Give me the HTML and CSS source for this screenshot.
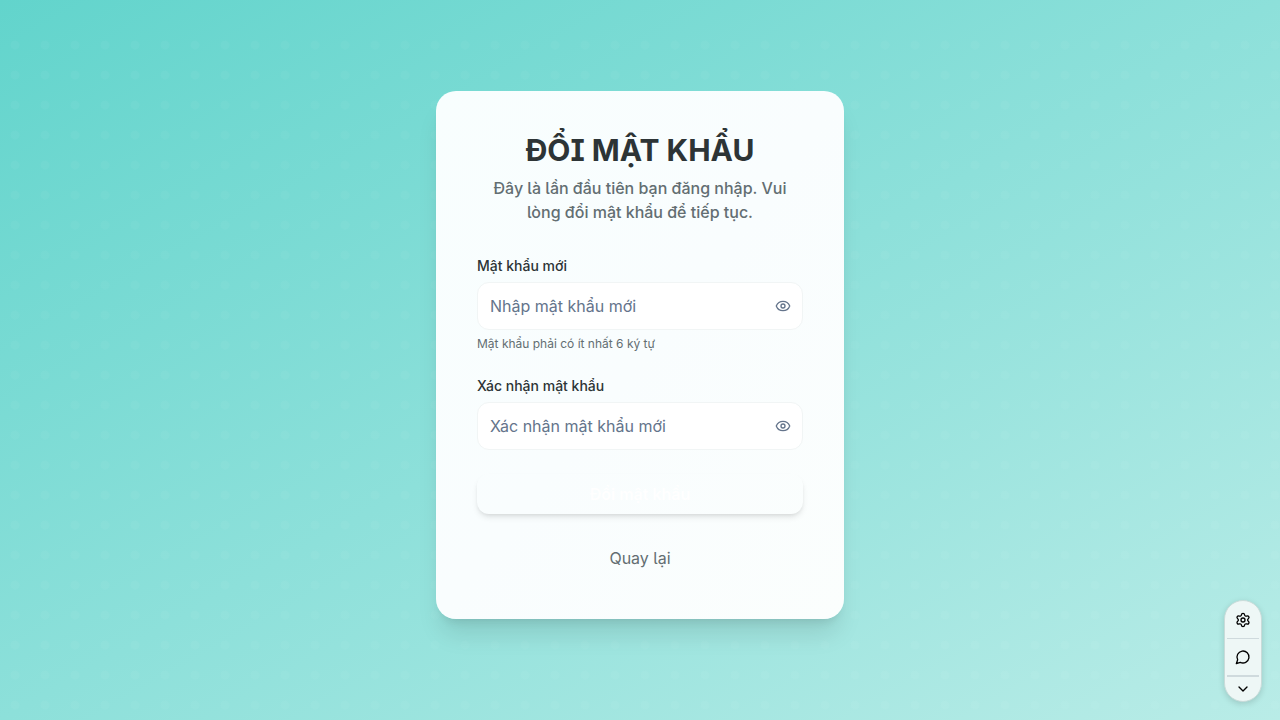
FILE: index.html
```html
<!DOCTYPE html>
<html lang="vi">
<head>
<meta charset="utf-8">
<meta name="viewport" content="width=device-width, initial-scale=1">
<title>Đổi mật khẩu</title>
<link rel="stylesheet" href="styles.css">
</head>
<body>
<main class="page">
  <form class="card">
    <header class="card-header">
      <h1 class="title">ĐỔI MẬT KHẨU</h1>
      <p class="subtitle">Đây là lần đầu tiên bạn đăng nhập. Vui lòng đổi mật khẩu để tiếp tục.</p>
    </header>
    <div class="fields">
      <div class="field">
        <label class="label" for="new-password">Mật khẩu mới</label>
        <div class="control">
          <input class="input" id="new-password" type="password" placeholder="Nhập mật khẩu mới">
          <button class="reveal" type="button" aria-label="Hiện mật khẩu">
            <svg class="eye" viewBox="0 0 24 24"><path d="M2.062 12.348a1 1 0 0 1 0-.696 10.75 10.75 0 0 1 19.876 0 1 1 0 0 1 0 .696 10.75 10.75 0 0 1-19.876 0"/><circle cx="12" cy="12" r="3"/></svg>
          </button>
        </div>
        <p class="hint">Mật khẩu phải có ít nhất 6 ký tự</p>
      </div>
      <div class="field">
        <label class="label" for="confirm-password">Xác nhận mật khẩu</label>
        <div class="control">
          <input class="input" id="confirm-password" type="password" placeholder="Xác nhận mật khẩu mới">
          <button class="reveal" type="button" aria-label="Hiện mật khẩu">
            <svg class="eye" viewBox="0 0 24 24"><path d="M2.062 12.348a1 1 0 0 1 0-.696 10.75 10.75 0 0 1 19.876 0 1 1 0 0 1 0 .696 10.75 10.75 0 0 1-19.876 0"/><circle cx="12" cy="12" r="3"/></svg>
          </button>
        </div>
      </div>
    </div>
    <button class="submit" type="submit">Đổi mật khẩu</button>
    <button class="back" type="button">Quay lại</button>
  </form>
</main>
<aside class="toolbar" aria-label="Công cụ">
  <button class="tool" type="button" aria-label="Cài đặt">
    <svg class="tool-icon" viewBox="0 0 24 24"><path d="M9.671 4.136a2.34 2.34 0 0 1 4.659 0 2.34 2.34 0 0 0 3.319 1.915 2.34 2.34 0 0 1 2.33 4.033 2.34 2.34 0 0 0 0 3.831 2.34 2.34 0 0 1-2.33 4.033 2.34 2.34 0 0 0-3.319 1.915 2.34 2.34 0 0 1-4.659 0 2.34 2.34 0 0 0-3.32-1.915 2.34 2.34 0 0 1-2.33-4.033 2.34 2.34 0 0 0 0-3.831A2.34 2.34 0 0 1 6.35 6.051a2.34 2.34 0 0 0 3.319-1.915"/><circle cx="12" cy="12" r="3"/></svg>
  </button>
  <button class="tool" type="button" aria-label="Trò chuyện">
    <svg class="tool-icon" viewBox="0 0 24 24"><path d="M7.9 20A9 9 0 1 0 4 16.1L2 22Z"/></svg>
  </button>
  <button class="tool tool-small" type="button" aria-label="Thu gọn">
    <svg class="tool-icon" viewBox="0 0 24 24"><path d="m6 9 6 6 6-6"/></svg>
  </button>
</aside>
</body>
</html>
```
FILE: styles.css
```css
*, *::before, *::after { box-sizing: border-box; }
body {
  margin: 0;
  font-family: Inter, "Noto Sans", sans-serif;
  font-size: 16px;
  line-height: 24px;
  color: #2d3436;
  font-feature-settings: "cv05", "cv08";
}
button, input { font: inherit; font-feature-settings: inherit; color: inherit; }
button { border: 0; background: none; padding: 0; cursor: pointer; }
h1, p { margin: 0; }
.page {
  position: relative;
  min-height: 100vh;
  display: flex;
  align-items: center;
  justify-content: center;
  padding: 16px 16px 26px;
  background: linear-gradient(to bottom right, #62d4cc 0%, #8de0da 50%, #b9ece7 100%);
}
/* Faint dot texture, starting one tile below the top edge */
.page::before {
  content: "";
  position: absolute;
  inset: 30px 0 0;
  background: radial-gradient(circle, rgba(255, 255, 255, 0.03) 4px, transparent 5px) 0 0 / 30px 30px;
}
.card {
  position: relative;
  width: 100%;
  max-width: 408px;
  display: flex;
  flex-direction: column;
  align-items: stretch;
  padding: 41px;
  border-radius: 20px;
  background: linear-gradient(to bottom right, #f8fefe 0%, #f9fdfe 50%, #fbfefd 100%);
  box-shadow: 0 20px 25px -5px rgba(0, 0, 0, 0.1), 0 8px 10px -6px rgba(0, 0, 0, 0.1);
}
.card-header { text-align: center; margin-bottom: 32px; }
.title {
  font-size: 30px;
  line-height: 36px;
  font-weight: 700;
  margin-bottom: 8px;
}
.subtitle { font-weight: 500; color: #636e72; }
.fields { display: flex; flex-direction: column; gap: 24px; }
.label { display: block; font-size: 14px; line-height: 20px; font-weight: 500; margin-bottom: 6px; }
.control { position: relative; }
.input {
  display: block;
  width: 100%;
  height: 48px;
  padding: 0 40px 0 12px;
  border: 1px solid #f1f5f5;
  border-radius: 12px;
  background: #fff;
}
.input::placeholder { color: #64748b; opacity: 1; }
.reveal {
  position: absolute;
  top: 0;
  right: 0;
  height: 100%;
  width: 40px;
  display: grid;
  place-items: center;
  color: #64748b;
}
.eye, .tool-icon {
  width: 16px;
  height: 16px;
  fill: none;
  stroke: currentColor;
  stroke-width: 2;
  stroke-linecap: round;
  stroke-linejoin: round;
}
.hint { font-size: 12px; line-height: 16px; color: #636e72; margin-top: 6px; }
.submit {
  height: 40px;
  margin: 24px 0;
  border-radius: 12px;
  font-weight: 600;
  color: #fff;
  box-shadow: 0 4px 6px -1px rgba(0, 0, 0, 0.1), 0 2px 4px -2px rgba(0, 0, 0, 0.1);
}
.back { height: 40px; color: #636e72; }
.toolbar {
  position: fixed;
  right: 18px;
  bottom: 18px;
  width: 38px;
  padding: 0 2px;
  display: flex;
  flex-direction: column;
  border: 1px solid #c9dbd9;
  border-radius: 19px;
  background: #eef7f6;
  box-shadow: 0 2px 6px rgba(0, 0, 0, 0.15);
}
.tool { height: 37px; display: grid; place-items: center; color: #000; }
.tool + .tool { border-top: 1px solid #cfdadd; }
.tool + .tool-small { height: 26px; border-top: 2px solid #cfdadd; }
```
